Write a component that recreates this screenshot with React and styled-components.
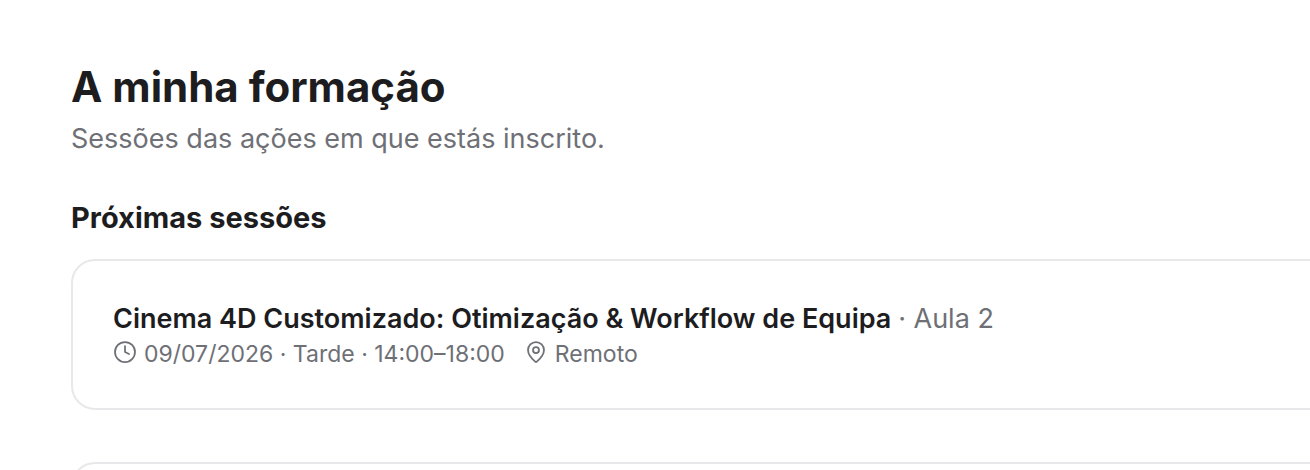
import React from "react";
import styled, { createGlobalStyle } from "styled-components";

const Global = createGlobalStyle`
  html, body { margin: 0; padding: 0; background: #fff; overflow: hidden; height: 470px; }
  body { font-family: Inter, "Liberation Sans", sans-serif; color: #1d1d1f; }
  * { box-sizing: border-box; }
`;
const Page = styled.main`
  padding: 63px 0 0 71px;
  width: 1310px;
  height: 470px;
  overflow: hidden;
`;
const Title = styled.h1`
  margin: 0;
  font-size: 42px;
  line-height: 48px;
  font-weight: 700;
`;
const Subtitle = styled.p`
  margin: 10px 0 0;
  font-size: 27px;
  line-height: 36px;
  color: #6e7076;
`;
const Heading = styled.h2`
  margin: 43px 0 0;
  font-size: 29px;
  line-height: 36px;
  font-weight: 700;
`;
const Card = styled.article`
  width: 1300px;
  height: 151px;
  margin: ${p => p.$gap}px 0 0;
  padding: 42px 40px;
  border: 2px solid #e8e8ea;
  border-radius: 24px;
  background: #fff;
`;
const CardTitle = styled.div`
  font-size: 27px;
  line-height: 32px;
  font-weight: 600;
`;
const Muted = styled.span`
  font-weight: 400;
  color: #6e7076;
`;
const Meta = styled.div`
  display: flex;
  align-items: center;
  gap: 19px;
  margin-top: 4px;
  font-size: 23px;
  line-height: 30px;
  color: #6e7076;
`;
const MetaItem = styled.span`
  display: inline-flex;
  align-items: center;
  gap: 7px;
`;
const Stroke = styled.svg`
  width: 24px;
  height: 24px;
  margin-top: -4px;
  fill: none;
  stroke: currentColor;
  stroke-width: 1.75;
  stroke-linecap: round;
  stroke-linejoin: round;
`;

export default function App() {
  return (
    <Page>
      <Global />
      <Title>A minha formação</Title>
      <Subtitle>Sessões das ações em que estás inscrito.</Subtitle>
      <Heading>Próximas sessões</Heading>
      <Card $gap={23}>
        <CardTitle>
          Cinema 4D Customizado: Otimização &amp; Workflow de Equipa <Muted>· Aula 2</Muted>
        </CardTitle>
        <Meta>
          <MetaItem>
            <Stroke viewBox="0 0 24 24"><circle cx="12" cy="12" r="10" /><path d="M12 6v6l4 2" /></Stroke>
            09/07/2026 · Tarde · 14:00–18:00
          </MetaItem>
          <MetaItem>
            <Stroke viewBox="0 0 24 24"><path d="M20 10c0 5-5.5 10.2-7.4 11.8a1 1 0 0 1-1.2 0C9.5 20.2 4 15 4 10a8 8 0 0 1 16 0" /><circle cx="12" cy="10" r="3" /></Stroke>
            Remoto
          </MetaItem>
        </Meta>
      </Card>
      <Card $gap={52} />
    </Page>
  );
}
